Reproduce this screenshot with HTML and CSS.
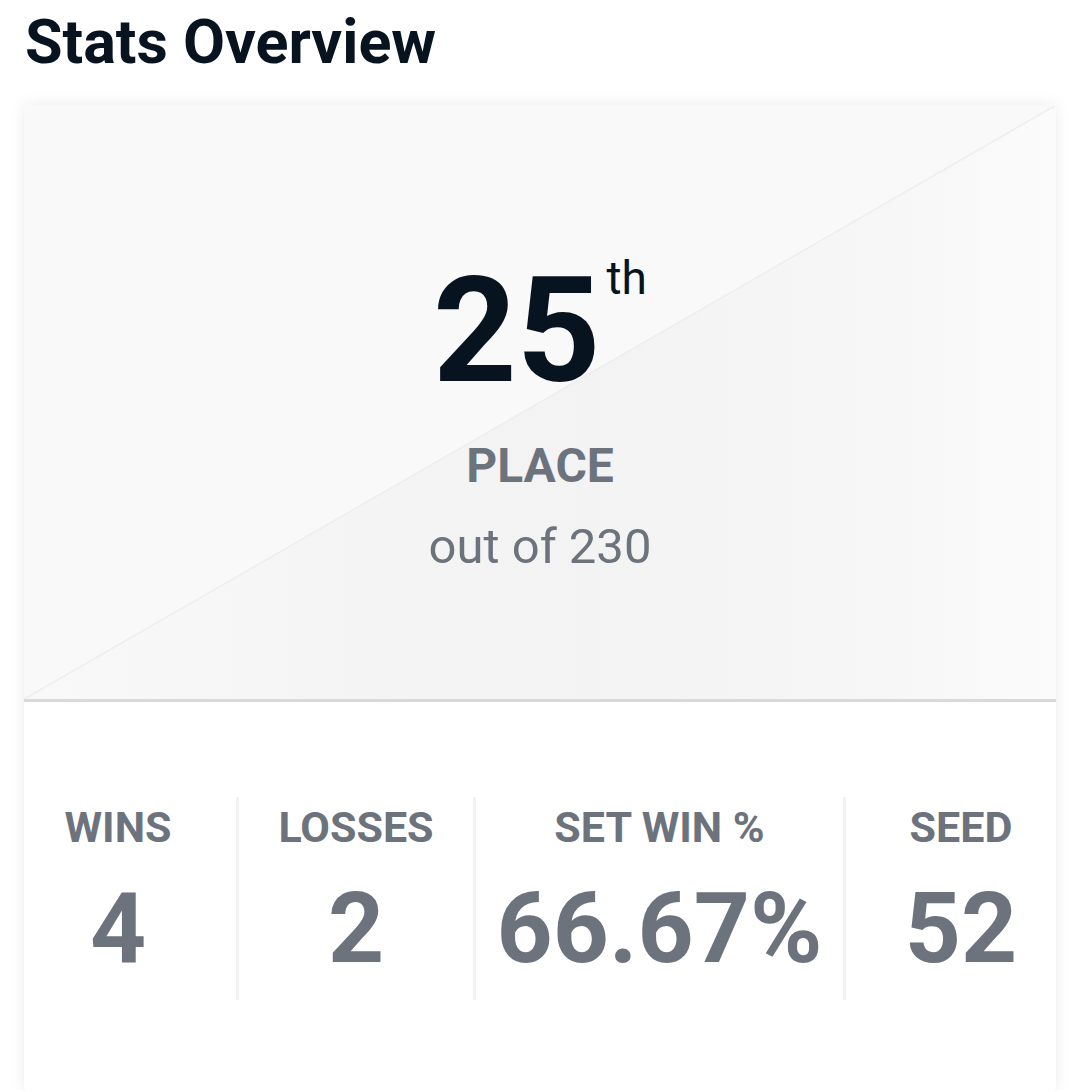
FILE: index.html
```html
<!DOCTYPE html>
<html lang="en">
<head>
<meta charset="utf-8">
<title>Stats Overview</title>
<link rel="stylesheet" href="styles.css">
</head>
<body>
<main class="page">
  <h1 class="page-title">Stats Overview</h1>
  <section class="card">
    <div class="rank">
      <div class="rank-number">25<sup class="rank-suffix">th</sup></div>
      <div class="rank-label">PLACE</div>
      <div class="rank-total">out of 230</div>
    </div>
    <div class="stats">
      <div class="stat stat-first">
        <div class="stat-label">WINS</div>
        <div class="stat-value">4</div>
      </div>
      <div class="stat">
        <div class="stat-label">LOSSES</div>
        <div class="stat-value">2</div>
      </div>
      <div class="stat">
        <div class="stat-label">SET WIN %</div>
        <div class="stat-value">66.67%</div>
      </div>
      <div class="stat stat-last">
        <div class="stat-label">SEED</div>
        <div class="stat-value">52</div>
      </div>
    </div>
  </section>
</main>
</body>
</html>
```

FILE: styles.css
```css
* { box-sizing: border-box; }

html, body {
  margin: 0;
  padding: 0;
  background: #ffffff;
}

body {
  font-family: Roboto, "Liberation Sans", Arial, sans-serif;
  overflow: hidden;
}

.page {
  padding: 0 24px;
}

.page-title {
  margin: 6px 0 27px;
  padding-left: 1px;
  font-size: 61px;
  line-height: 72px;
  font-weight: 700;
  color: #07131f;
}

.card {
  background: #ffffff;
  border-radius: 4px;
  box-shadow: 0 0 18px rgba(0, 0, 0, 0.08), 0 2px 4px rgba(0, 0, 0, 0.02);
  overflow: hidden;
}

.rank {
  display: flex;
  flex-direction: column;
  align-items: center;
  padding: 154px 0 124px;
  border-bottom: 3px solid #d8d8dd;
  background:
    linear-gradient(to bottom right, #f9f9fa calc(50% - 1px), #ececed 50%, transparent calc(50% + 1.5px)),
    linear-gradient(to right, #f9f9f9 0%, #f4f4f4 35%, #f3f3f3 55%, #f6f6f6 80%, #fbfbfb 100%);
}

.rank-number {
  font-size: 146px;
  line-height: 146px;
  font-weight: 700;
  color: #07131f;
}

.rank-suffix {
  font-size: 46px;
  line-height: 0;
  font-weight: 400;
  vertical-align: 87px;
  margin-left: 6px;
}

.rank-label {
  margin-top: 33px;
  font-size: 48px;
  line-height: 56px;
  font-weight: 700;
  color: #6c737d;
}

.rank-total {
  margin-top: 25px;
  font-size: 49px;
  line-height: 56px;
  font-weight: 400;
  color: #6c737d;
}

.stats {
  display: grid;
  grid-template-columns: 212fr 237fr 370fr 213fr;
  padding: 95px 0 90px;
}

.stat {
  display: flex;
  flex-direction: column;
  align-items: center;
  padding: 5px 0 11px;
  border-left: 3px solid #f1f2f4;
}

.stat-first {
  border-left: none;
  padding-right: 24px;
}

.stat-last {
  padding-left: 20px;
}

.stat-label {
  font-size: 43px;
  line-height: 50px;
  font-weight: 700;
  color: #6c737d;
}

.stat-value {
  margin-top: 17px;
  font-size: 98px;
  line-height: 120px;
  font-weight: 700;
  color: #6c737d;
}
```
